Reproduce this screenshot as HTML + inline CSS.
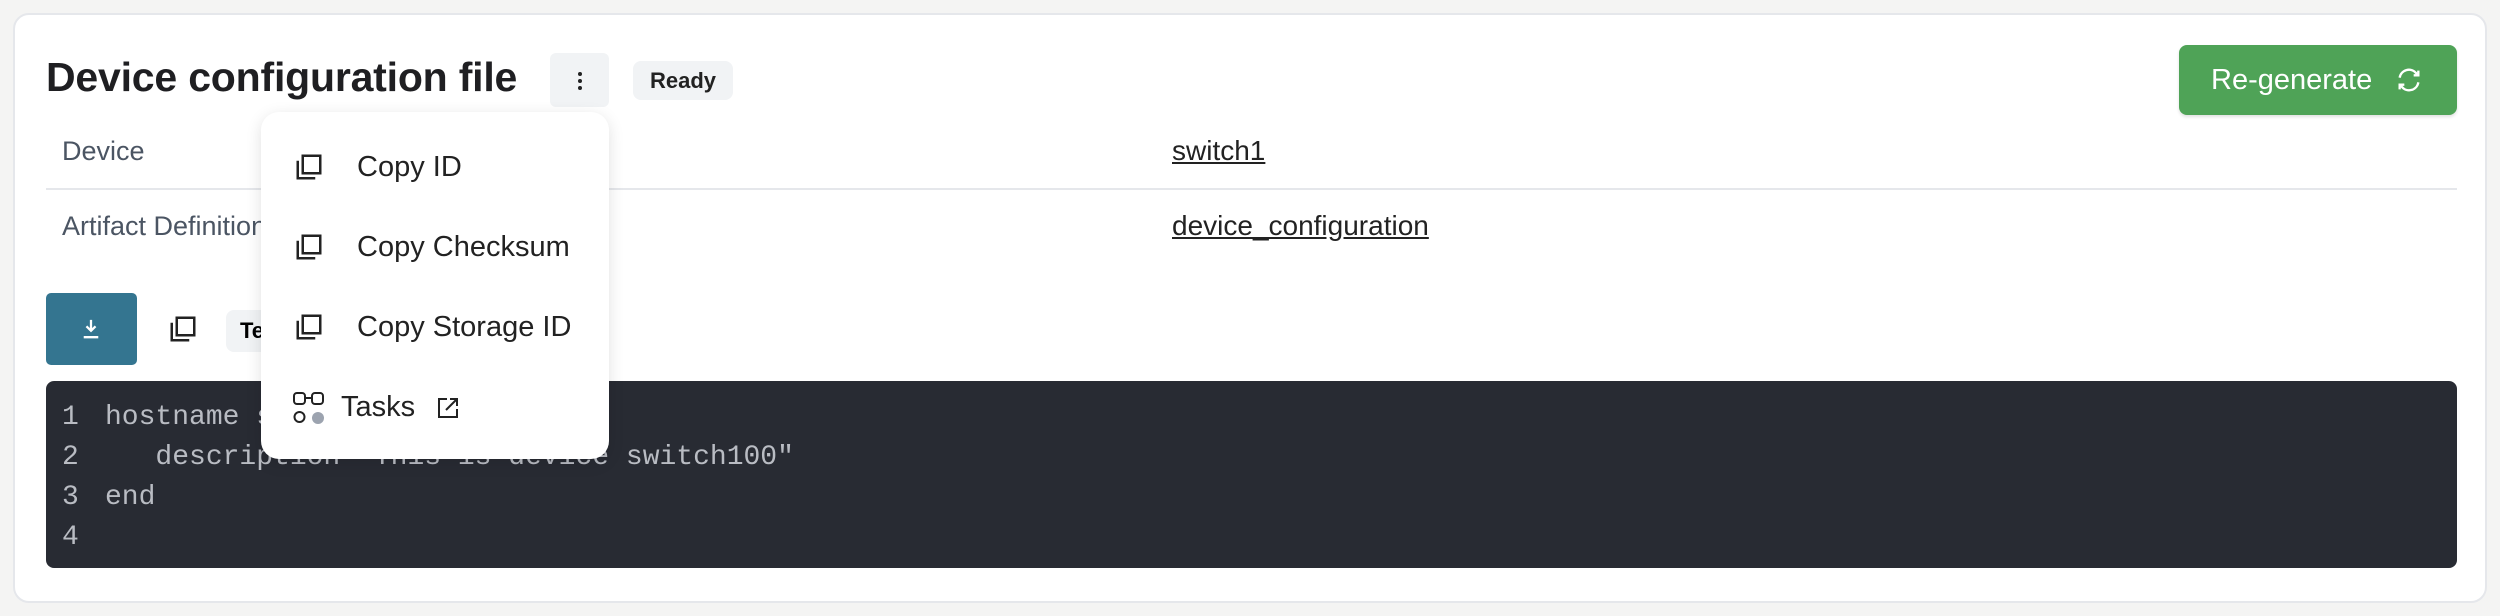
<!DOCTYPE html>
<html><head><style>
*{box-sizing:border-box;margin:0;padding:0}
body{width:2500px;height:616px;background:#f4f4f3;font-family:"Liberation Sans",sans-serif;position:relative;overflow:hidden}
.card{position:absolute;left:13px;top:13px;width:2474px;height:590px;background:#fff;border:2px solid #e5e7eb;border-radius:16px}
.abs{position:absolute}
.title{left:46px;top:54px;font-size:41px;font-weight:bold;color:#1f1f22;letter-spacing:-0.2px}
.kebab{left:550px;top:53px;width:59px;height:54px;background:#f1f3f5;border-radius:6px}
.kebab i{position:absolute;left:28px;width:4px;height:4px;border-radius:50%;background:#222}
.ready{left:633px;top:61px;width:100px;height:39px;background:#f1f3f5;border-radius:8px;font-size:22px;font-weight:bold;color:#222;text-align:center;line-height:39px}
.regen{left:2179px;top:45px;width:278px;height:70px;background:#4fa357;border-radius:8px;color:#fff;font-size:29px;line-height:70px;padding-left:32px;box-shadow:0 2px 3px rgba(0,0,0,.12)}
.lbl{font-size:27px;color:#4b5563}
.val{font-size:28px;color:#222;text-decoration:underline}
.div{left:46px;top:188px;width:2411px;height:2px;background:#e5e7eb}
.dl{left:46px;top:293px;width:91px;height:72px;background:#347590;border-radius:5px}
.te{left:226px;top:310px;width:60px;height:42px;background:#f1f3f5;border-radius:8px;font-size:22px;font-weight:bold;line-height:42px;padding-left:14px}
.code{left:46px;top:381px;width:2411px;height:187px;background:#282b33;border-radius:8px;font-family:"Liberation Mono",monospace;font-size:28px;color:#b9bcc3;padding:17px 0 0 16px;line-height:40px;white-space:pre}
.code span{display:inline-block;width:43px}
.menu{left:261px;top:112px;width:348px;height:347px;background:#fff;border-radius:18px;box-shadow:0 4px 16px rgba(0,0,0,.12)}
.it{position:absolute;left:0;font-size:29px;color:#222}
</style></head><body>
<div class="card"></div>
<div class="abs title">Device configuration file</div>
<div class="abs kebab"><i style="top:19px"></i><i style="top:26px"></i><i style="top:33px"></i></div>
<div class="abs ready">Ready</div>
<div class="abs regen">Re-generate
<svg class="abs" style="left:216px;top:21px" width="28" height="28" viewBox="0 0 24 24" fill="none" stroke="#fff" stroke-width="2"><path d="M4 10a8 8 0 0 1 14-4l2 2M20 4v4h-4M20 14a8 8 0 0 1-14 4l-2-2M4 20v-4h4"/></svg></div>
<div class="abs lbl" style="left:62px;top:136px">Device</div>
<div class="abs val" style="left:1172px;top:135px">switch1</div>
<div class="abs div"></div>
<div class="abs lbl" style="left:62px;top:211px">Artifact Definition</div>
<div class="abs val" style="left:1172px;top:210px">device_configuration</div>
<div class="abs dl"><svg class="abs" style="left:35px;top:25px" width="20" height="22" viewBox="0 0 22 24" fill="none" stroke="#fff" stroke-width="2.5"><path d="M11 2v12M6 9l5 5 5-5M3 21h16"/></svg></div>
<svg class="abs" style="left:168px;top:314px" width="30" height="30" viewBox="0 0 24 24" fill="none" stroke="#222" stroke-width="2"><rect x="7" y="3" width="14" height="14"/><path d="M3 7v14h14"/></svg>
<div class="abs te">Te</div>
<div class="abs code"><div><span>1</span>hostname switch100</div><div><span>2</span>   description "This is device switch100"</div><div><span>3</span>end</div><div><span>4</span></div></div>
<div class="abs menu">
<svg class="abs" style="left:33px;top:40px" width="30" height="30" viewBox="0 0 24 24" fill="none" stroke="#222" stroke-width="2"><rect x="7" y="3" width="14" height="14"/><path d="M3 7v14h14"/></svg>
<div class="it" style="left:96px;top:39px">Copy ID</div>
<svg class="abs" style="left:33px;top:120px" width="30" height="30" viewBox="0 0 24 24" fill="none" stroke="#222" stroke-width="2"><rect x="7" y="3" width="14" height="14"/><path d="M3 7v14h14"/></svg>
<div class="it" style="left:96px;top:119px">Copy Checksum</div>
<svg class="abs" style="left:33px;top:200px" width="30" height="30" viewBox="0 0 24 24" fill="none" stroke="#222" stroke-width="2"><rect x="7" y="3" width="14" height="14"/><path d="M3 7v14h14"/></svg>
<div class="it" style="left:96px;top:199px">Copy Storage ID</div>
<svg class="abs" style="left:31px;top:279px" width="34" height="34" viewBox="0 0 34 34" fill="none" stroke="#222" stroke-width="2"><rect x="2" y="2" width="11" height="11" rx="3"/><rect x="20" y="2" width="11" height="11" rx="3"/><path d="M13 7h7"/><circle cx="7.5" cy="26" r="5"/><circle cx="26" cy="27" r="6" fill="#9ca3af" stroke="none"/></svg>
<div class="it" style="left:80px;top:279px">Tasks</div>
<svg class="abs" style="left:175px;top:284px" width="24" height="24" viewBox="0 0 24 24" fill="none" stroke="#222" stroke-width="2"><path d="M11 3H3v18h18v-8M14 3h7v7M21 3L10 14"/></svg>
</div>
</body></html>
